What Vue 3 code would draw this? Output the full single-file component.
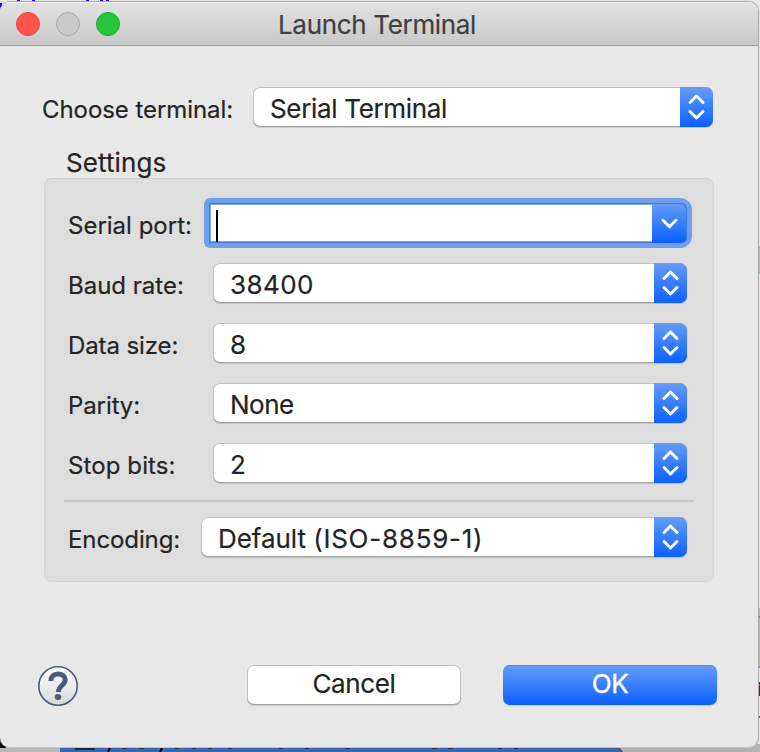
<script setup>
const rows = [
  { label: 'Baud rate:', value: '38400', cls: 'baud' },
  { label: 'Data size:', value: '8', cls: 'size' },
  { label: 'Parity:', value: 'None', cls: 'parity' },
  { label: 'Stop bits:', value: '2', cls: 'stop' },
]
</script>

<template>
  <div class="desktop">
    <svg class="backdrop" width="760" height="752" viewBox="0 0 760 752" aria-hidden="true">
      <rect width="760" height="752" fill="#e6e6e6" />
      <path d="M0 3h2v6H0zM17 0h3v3h-3zM32 0h3v3h-3zM86 0h3v3h-3zM100 0h3v3h-3zM106 0h3v3h-3z" fill="#2a00e8" />
      <rect x="758" y="246" width="2" height="28" fill="#a9b8d3" />
      <rect x="758" y="608" width="2" height="58" fill="#b5b5b5" />
      <rect x="758" y="616" width="2" height="2" fill="#888" />
      <rect x="758" y="666" width="2" height="2" fill="#9999bb" />
      <rect x="758" y="682" width="2" height="14" fill="#3d2b22" />
      <rect x="758" y="684" width="2" height="2" fill="#8a7200" />
      <rect x="758" y="716" width="2" height="2" fill="#666" />
      <rect y="744" width="61" height="8" fill="#b8b8b8" />
      <path d="M0 738h6v10H0z" fill="#000" />
      <path d="M60 744h558l5 8H60z" fill="#3568ad" />
      <path d="M617 744h143v8H623z" fill="#b2b2b2" />
      <path d="M617 747l5 5" stroke="#555" stroke-width="2" />
      <path d="M75 748h20v2H75z" fill="#142c4b" />
      <path d="M110 748l-2 4M162 748l-2 4" stroke="#000" stroke-width="2" />
      <path d="M122 748.5h5M139 748.5h5M175 748.5h4M192 748.5h4M208 748.5h4M228 748.5h4M279 748.5h4M305 748.5h4M345 748.5h5M432 748.5h5M448 748.5h5M498 748.5h4M514 748.5h4" stroke="#173050" />
    </svg>
    <main class="window">
      <header class="titlebar">
        <div class="lights"><i class="red"></i><i class="grey"></i><i class="green"></i></div>
        <h1>Launch Terminal</h1>
      </header>
      <div class="choose">
        <span class="label">Choose terminal:</span>
        <div class="select">
          <span class="value t-serial">Serial Terminal</span>
          <span class="stepper"><svg width="33" height="40" viewBox="0 0 33 40"><path d="M10 15.5l6.5-6.5 6.5 6.5M10 24.5l6.5 6.5 6.5-6.5" /></svg></span>
        </div>
      </div>
      <h2>Settings</h2>
      <section class="group">
        <div class="row first">
          <span class="label">Serial port:</span>
          <div class="combo">
            <span class="field"><i class="caret"></i></span>
            <span class="drop"><svg width="35" height="40" viewBox="0 0 35 40"><path d="M11 17.3l6.5 6.5 6.5-6.5" /></svg></span>
          </div>
        </div>
        <div v-for="r in rows" :key="r.label" class="row">
          <span class="label" :class="'l-' + r.cls">{{ r.label }}</span>
          <div class="select">
            <span class="value" :class="'v-' + r.cls">{{ r.value }}</span>
            <span class="stepper"><svg width="33" height="40" viewBox="0 0 33 40"><path d="M10 15.5l6.5-6.5 6.5 6.5M10 24.5l6.5 6.5 6.5-6.5" /></svg></span>
          </div>
        </div>
        <div class="rule"></div>
        <div class="row enc">
          <span class="label l-enc">Encoding:</span>
          <div class="select">
            <span class="value v-enc">Default <span class="charset">(ISO-8859-1)</span></span>
            <span class="stepper"><svg width="33" height="40" viewBox="0 0 33 40"><path d="M10 15.5l6.5-6.5 6.5 6.5M10 24.5l6.5 6.5 6.5-6.5" /></svg></span>
          </div>
        </div>
      </section>
      <footer>
        <svg class="help" width="40" height="40" viewBox="0 0 40 40">
          <defs><linearGradient id="hg" x1="0" y1="0" x2="0" y2="1"><stop offset="0" stop-color="#fff" /><stop offset="1" stop-color="#d9d9d9" /></linearGradient></defs>
          <circle cx="20" cy="20" r="19.2" fill="url(#hg)" stroke="#4a5c7c" stroke-width="1.6" />
          <path d="M12.8 15C12.9 10.500 15.600 8 20 8c4.500 0 7.200 2.400 7.200 5.800 0 5.400-6.700 5.600-6.700 12.200" fill="none" stroke="#4a5c7c" stroke-width="5" />
          <ellipse cx="20" cy="31" rx="3.300" ry="3" fill="#4a5c7c" />
        </svg>
        <button class="cancel">Cancel</button>
        <button class="ok">OK</button>
      </footer>
    </main>
  </div>
</template>

<style>
body { margin: 0; overflow: hidden; }
</style>

<style scoped>
* { box-sizing: border-box; }
.desktop { position: relative; width: 760px; height: 752px; padding-top: 1px; overflow: hidden; font-family: Inter, "Liberation Sans", sans-serif; color: #242424; -webkit-text-stroke: 0.2px; }
.backdrop { position: absolute; inset: 0; }
.window { position: relative; width: 759px; height: 747px; display: flex; flex-direction: column; background: #e8e8e8; border: 1px solid #a9a9a9; border-left: 0; border-bottom-color: #c4c4c4; border-radius: 10px; overflow: hidden; }
.titlebar { flex: none; height: 44px; display: flex; align-items: center; padding-left: 16px; background: linear-gradient(#e2e2e2, #c8c8c8); border-bottom: 1px solid #999; box-shadow: inset 0 1px #f3f3f3; }
.lights { display: flex; gap: 16px; width: 262px; }
.lights i { width: 24px; height: 24px; border-radius: 50%; border: 1px solid; }
.red { background: #ff544d; border-color: #e2463f !important; }
.grey { background: #c9c9c9; border-color: #a8a8a8 !important; }
.green { background: #28c53c; border-color: #1ba62c !important; }
h1, h2 { margin: 0; font-weight: 400; font-size: 26px; line-height: 32px; white-space: nowrap; }
h1 { color: #404040; padding-top: 3px; letter-spacing: -0.33px; }
.choose { display: flex; height: 40px; margin: 41px 45px 0 42px; }
.label { flex: none; font-size: 24px; line-height: 40px; padding-top: 3px; height: 40px; white-space: nowrap; }
.choose .label { width: 211px; letter-spacing: -0.07px; }
.select { flex: 1; display: flex; height: 40px; border-radius: 7px; background: #fff; box-shadow: inset 0 -1px #a2a2a2, inset 0 0 0 1px #c1c1c1, 0 1px 1px rgba(0,0,0,.13); overflow: hidden; }
.value { flex: 1; padding-left: 17px; font-size: 26px; line-height: 43px; white-space: nowrap; }
.t-serial { letter-spacing: -0.33px; }
.v-baud { letter-spacing: 0.4px; }
.v-parity { letter-spacing: -0.5px; }
.v-enc { letter-spacing: -0.05px; }
.charset { letter-spacing: 0.75px; }
.l-size, .l-enc, .l-parity { letter-spacing: -0.1px; }
.l-stop { letter-spacing: 0.1px; }
.stepper, .drop { flex: none; background: linear-gradient(#669df8, #0a60ff); height: 40px; }
.stepper { width: 33px; }
.stepper svg, .drop svg { display: block; fill: none; stroke: #fff; stroke-width: 3; stroke-linecap: round; stroke-linejoin: round; }
h2 { margin: 20px 0 0 66px; height: 31px; line-height: 32px; letter-spacing: 0.1px; }
.group { flex: none; width: 670px; height: 404px; margin-left: 44px; border: 1px solid #d6d6d6; border-top-color: #cdcdcd; border-radius: 8px; background: #dedede; padding: 24px 26px 0 23px; }
.row { display: flex; height: 40px; margin-bottom: 20px; }
.row .label { width: 145px; }
.combo { flex: 1; display: flex; height: 40px; border-radius: 2px 7px 7px 2px; background: #fff; margin-left: -4px; box-shadow: 0 0 0 5px #719ee8; }
.field { flex: 1; padding: 6px 0 0 6px; border: 1px solid #477bd1; border-right: 0; box-shadow: inset 1px 1px #79a9f2, inset 0 -1px #79a9f2; }
.caret { display: block; width: 2px; height: 32px; background: #000; }
.drop { width: 35px; border-radius: 0 6px 6px 0; box-shadow: inset -1px 1px #397ce7; }
.rule { height: 2px; background: #c8c8c8; margin: -3px -7px 15px -4px; }
.row.enc .label { width: 133px; }
footer { display: flex; flex: none; margin: 83px 41px 0 38px; height: 41px; }
.help { margin-top: 1px; overflow: visible; }
button { width: 214px; height: 40px; border: 0; border-radius: 7px; padding: 0 0 2px; font: 26px/38px Inter, "Liberation Sans", sans-serif; color: #242424; -webkit-text-stroke: 0.2px; }
.cancel { margin-left: 169px; letter-spacing: -0.35px; background: #fff; box-shadow: inset 0 -1px #a2a2a2, inset 0 0 0 1px #c1c1c1, 0 1px 1px rgba(0,0,0,.13); }
.ok { margin-left: 42px; letter-spacing: -0.5px; color: #fff; -webkit-text-stroke: 0.4px; background: linear-gradient(#669df8, #0a60ff); box-shadow: inset 0 1px #4d8af0, 0 1px 1px rgba(0,0,0,.1); }
</style>
